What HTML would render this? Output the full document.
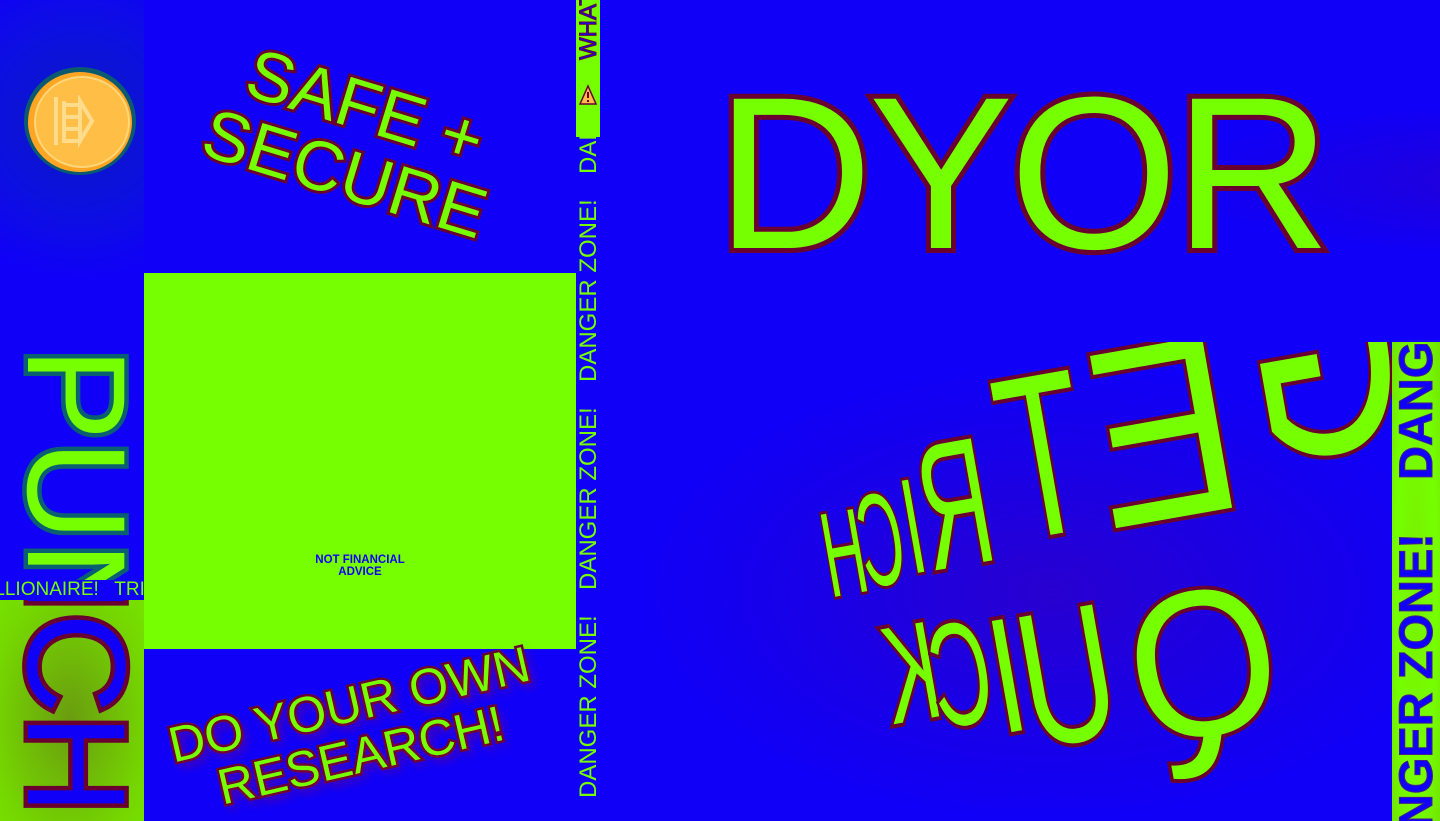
<!DOCTYPE html>
<html><head><meta charset="utf-8"><style>
*{margin:0;padding:0;box-sizing:border-box}
html,body{width:1440px;height:821px;overflow:hidden}
body{background:#1000f8;font-family:"Liberation Sans",Arial,sans-serif;position:relative}
.abs{position:absolute}
.g{color:#76ff00}
.out{-webkit-text-stroke:8px #6a0030;paint-order:stroke fill}
.L{position:absolute;line-height:1;color:#76ff00;-webkit-text-stroke:8px #6a0030;paint-order:stroke fill;white-space:nowrap}
</style></head><body>
<!-- left column -->
<div class="abs" style="left:0;top:0;width:144px;height:580px;background:radial-gradient(circle at 80px 120px,#0a18c0 0,#0c10e0 90px,#1000f8 160px);overflow:hidden">
  <div class="abs" style="left:24px;top:67px;width:112px;height:108px;border-radius:50%;background:#0b5a70"></div>
  <div class="abs" style="left:28px;top:72px;width:104px;height:100px;border-radius:50%;background:#ffa524"></div>
  <div class="abs" style="left:34px;top:76px;width:96px;height:92px;border-radius:50%;background:#ffbe45;border:2px solid #ffd77a"></div>
  <svg class="abs" style="left:50px;top:95px" width="50" height="55" viewBox="0 0 50 55"><g fill="none" stroke="#ffdc8c" stroke-width="4"><path d="M6 2v48M14 6v42M14 10h15M14 22h15M14 34h15M14 46h15M30 6l12 20-12 20z"/></g></svg>
  <div class="abs g" style="left:146px;top:347px;transform-origin:0 0;transform:rotate(90deg);font-size:140px;line-height:1;white-space:nowrap;-webkit-text-stroke:9px #0a6070;paint-order:stroke fill">PUNCH</div>
</div>
<div class="abs" style="left:0;top:580px;width:144px;height:20px;background:#1000f8;color:#76ff00;font-size:19px;line-height:20px;white-space:nowrap;overflow:hidden"><span style="margin-left:-11px">ILLIONAIRE! &nbsp; TRILLIONAIRE!</span></div>
<div class="abs" style="left:0;top:600px;width:144px;height:221px;background:radial-gradient(ellipse at 70px 120px,#6a9c10 0,#75d800 80px,#78f000 140px);overflow:hidden">
  <div class="abs" style="left:146px;top:-283px;transform-origin:0 0;transform:rotate(90deg);font-size:140px;line-height:1;white-space:nowrap;color:#1000f8;-webkit-text-stroke:9px #6a0030;paint-order:stroke fill">PUNCH</div>
</div>
<!-- middle column -->
<div class="abs g out" style="left:185px;top:70px;width:340px;text-align:center;font-size:70px;line-height:70px;transform:rotate(17deg);-webkit-text-stroke:6px #6a0030">SAFE +<br>SECURE</div>
<div class="abs" style="left:144px;top:273px;width:432px;height:376px;background:#76ff00"></div>
<div class="abs" style="left:295px;top:554px;width:130px;text-align:center;color:#1000f8;font-size:11.5px;font-weight:bold;line-height:12px">NOT FINANCIAL<br>ADVICE</div>
<div class="abs g" style="left:150px;top:678px;width:410px;text-align:center;font-size:50px;line-height:52px;transform:rotate(-13deg);-webkit-text-stroke:5px #6a0030;paint-order:stroke fill;text-shadow:3px 6px 10px rgba(150,0,80,.7)">DO YOUR OWN<br>RESEARCH!</div>
<!-- danger strip -->
<div class="abs" style="left:576px;top:0;width:24px;height:821px;background:#1000f8;overflow:hidden">
  <div class="abs" style="left:2px;top:798px;transform-origin:0 0;transform:rotate(-90deg);white-space:nowrap;font-size:24px;line-height:21px;color:#76ff00;display:flex">
    <span style="width:208px;flex:none">DANGER ZONE!</span><span style="width:208px;flex:none">DANGER ZONE!</span><span style="width:208px;flex:none">DANGER ZONE!</span><span style="width:208px;flex:none">DANGER ZONE!</span>
  </div>
  <div class="abs" style="left:0;top:0;width:24px;height:137px;background:#76ff00"></div>
  <div class="abs" style="left:2px;top:60px;transform-origin:0 0;transform:rotate(-90deg);white-space:nowrap;font-size:24px;line-height:21px;color:#1000f8;-webkit-text-stroke:1px #6a0030">WHAT</div>
  <svg class="abs" style="left:2px;top:84px" width="20" height="22" viewBox="0 0 20 22"><path d="M2 20L10 2l8 18z" fill="#ffb84a" stroke="#6a0030" stroke-width="1.5"/><path d="M10 8v6M10 16v2" stroke="#6a0030" stroke-width="2"/></svg>
</div>
<!-- right -->
<div class="abs" style="left:600px;top:0;width:840px;height:342px;background:radial-gradient(ellipse at 1000px 180px,#2a00d0 0,#1800e8 250px,#1000f8 450px)"></div>
<div class="abs g out" style="left:716px;top:58px;font-size:217px;line-height:230px;letter-spacing:-4px;-webkit-text-stroke:10px #6a0030">DYOR</div>
<div class="abs" style="left:600px;top:342px;width:792px;height:479px;background:radial-gradient(ellipse at 450px 250px,#2800d0 0,#1800e8 250px,#1000f8 420px);overflow:hidden">
  <span class="L" style="left:311px;top:331px;font-size:139px;transform:translate(-50%,-50%) rotate(-10deg) scale(-.58,1)">K</span>
  <span class="L" style="left:361px;top:333px;font-size:147px;transform:translate(-50%,-50%) rotate(-10deg) scale(-.56,1)">C</span>
  <span class="L" style="left:407px;top:334px;font-size:164px;transform:translate(-50%,-50%) rotate(-10deg) scale(-.7,1)">I</span>
  <span class="L" style="left:467px;top:334px;font-size:192px;transform:translate(-50%,-50%) rotate(-10deg) scale(-.68,1)">U</span>
  <span class="L" style="left:603px;top:322px;font-size:208px;transform:translate(-50%,-50%) rotate(-10deg) scale(-.92,1)">Q</span>
  <span class="L" style="left:244px;top:211px;font-size:121px;-webkit-text-stroke:6px #6a0030;transform:translate(-50%,-50%) rotate(-10deg) scale(-.48,1)">H</span>
  <span class="L" style="left:281px;top:198px;font-size:132px;-webkit-text-stroke:6px #6a0030;transform:translate(-50%,-50%) rotate(-10deg) scale(-.46,1)">C</span>
  <span class="L" style="left:313px;top:184px;font-size:136px;-webkit-text-stroke:6px #6a0030;transform:translate(-50%,-50%) rotate(-10deg) scale(-.5,1)">I</span>
  <span class="L" style="left:355px;top:163px;font-size:180px;transform:translate(-50%,-50%) rotate(-10deg) scale(-.54,1)">R</span>
  <span class="L" style="left:443px;top:114px;font-size:232px;transform:translate(-50%,-50%) rotate(-10deg) scale(-.6,1)">T</span>
  <span class="L" style="left:563px;top:89px;font-size:253px;transform:translate(-50%,-50%) rotate(-10deg) scale(-.86,1)">E</span>
  <span class="L" style="left:721px;top:11px;font-size:290px;transform:translate(-50%,-50%) rotate(-10deg) scale(-.68,1)">G</span>
</div>
<div class="abs" style="left:1392px;top:342px;width:48px;height:479px;background:radial-gradient(ellipse at 24px 240px,#78f000 0,#76ff00 20px,#6cc800 48px);overflow:hidden">
  <div class="abs" style="left:3px;top:554px;transform-origin:0 0;transform:rotate(-90deg);white-space:nowrap;font-size:47px;line-height:42px;color:#1000f8;font-weight:bold;-webkit-text-stroke:1px #40208a;display:flex">
    <span style="width:416px;flex:none">DANGER ZONE!</span><span style="width:416px;flex:none">DANGER ZONE!</span>
  </div>
</div>
</body></html>
